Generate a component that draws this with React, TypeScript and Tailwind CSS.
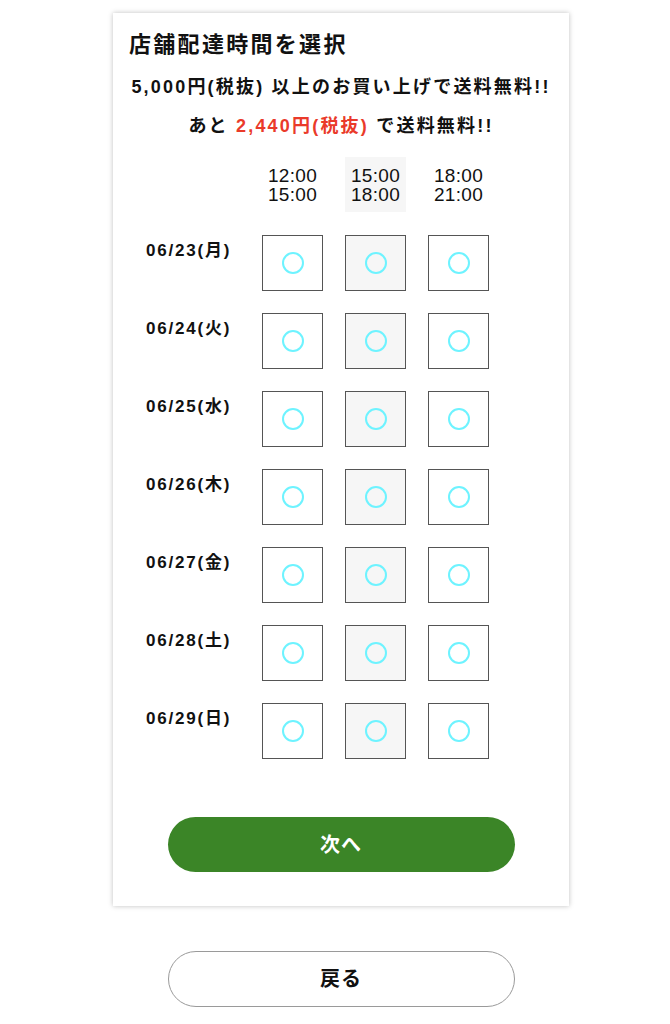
const font = { fontFamily: '"Liberation Sans", "Noto Sans CJK JP", sans-serif' };

const slots = [
  { from: "12:00", to: "15:00" },
  { from: "15:00", to: "18:00" },
  { from: "18:00", to: "21:00" },
];

const days = ["06/23(月)", "06/24(火)", "06/25(水)", "06/26(木)", "06/27(金)", "06/28(土)", "06/29(日)"];

const SlotBox = ({ shaded }: { shaded: boolean }) => (
  <button
    className={`w-[61px] h-[56px] border border-[#555] flex items-center justify-center ${shaded ? "bg-[#f6f6f6]" : "bg-white"}`}
  >
    <span className="block size-[22px] rounded-full border-[2.5px] border-[#6ef3ff]" />
  </button>
);

export default function App() {
  return (
    <div className="w-full min-h-[1024px] bg-white text-[#111]" style={font}>
      <div className="ml-[113px] w-[456px] pt-[13px]">
        <div className="bg-white shadow-[0_0_5px_rgba(0,0,0,0.25)] pt-[20px] pb-[34px]">
          <h1 className="pl-[16px] text-[22px] leading-[24px] tracking-[2.3px] font-semibold">店舗配達時間を選択</h1>
          <p className="mt-[19px] text-center text-[18px] leading-[22px] tracking-[2.2px] font-bold whitespace-nowrap">
            5,000円(税抜) 以上のお買い上げで送料無料!!
          </p>
          <p className="mt-[17px] text-center text-[18px] leading-[22px] tracking-[2.2px] font-bold whitespace-nowrap">
            あと <span className="text-[#ea3a2a]">2,440円(税抜)</span> で送料無料!!
          </p>

          <div className="mt-[20px] pl-[149px] flex gap-[22px]">
            {slots.map((s, i) => (
              <div
                key={s.from}
                className={`w-[61px] h-[55px] flex flex-col items-center justify-center text-[19px] leading-[19px] tracking-[0.3px] ${i === 1 ? "bg-[#f6f6f6]" : ""}`}
              >
                <span>{s.from}</span>
                <span>{s.to}</span>
              </div>
            ))}
          </div>

          <div className="mt-[23px] flex flex-col gap-[22px]">
            {days.map((d) => (
              <div key={d} className="flex">
                <div className="w-[149px] pl-[33px] pt-[6px] text-[17px] leading-[20px] tracking-[1.8px] font-bold whitespace-nowrap">
                  {d}
                </div>
                <div className="flex gap-[22px]">
                  {slots.map((s, i) => (
                    <SlotBox key={s.from} shaded={i === 1} />
                  ))}
                </div>
              </div>
            ))}
          </div>

          <div className="mt-[58px] flex justify-center">
            <button className="w-[347px] h-[55px] rounded-full bg-[#3b8527] text-white text-[20px] tracking-[1px] font-bold">
              次へ
            </button>
          </div>
        </div>

        <div className="mt-[45px] flex justify-center">
          <button className="w-[347px] h-[56px] rounded-full border border-[#9a9a9a] bg-white text-[20px] tracking-[1px] font-bold">
            戻る
          </button>
        </div>
      </div>
    </div>
  );
}
